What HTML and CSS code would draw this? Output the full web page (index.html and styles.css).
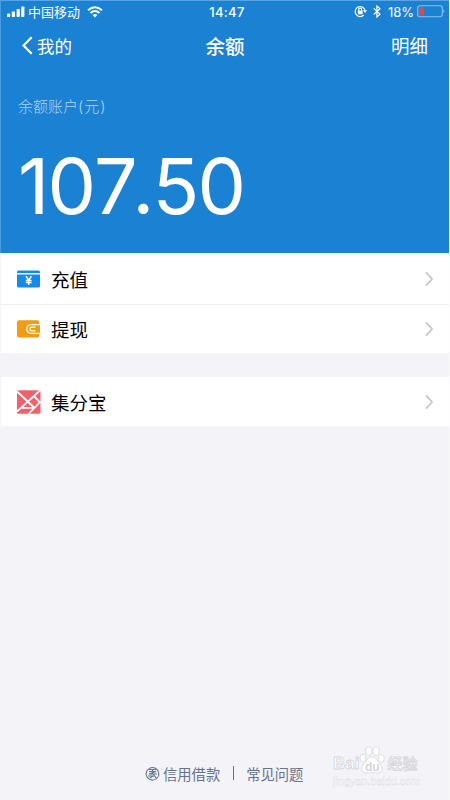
FILE: index.html
```html
<!DOCTYPE html>
<html lang="zh-CN">
<head>
<meta charset="utf-8">
<title>余额</title>
<link rel="stylesheet" href="styles.css">
</head>
<body>
<main class="screen">
  <header class="hero">
    <div class="status">
      <div class="carrier">
        <svg class="signal" width="18" height="12" viewBox="0 0 18 12"><rect x="0" y="7.5" width="3.2" height="3.5" rx=".8"/><rect x="4.8" y="5.5" width="3.2" height="5.5" rx=".8"/><rect x="9.6" y="3" width="3.2" height="8" rx=".8"/><rect x="14.2" y="0.5" width="3.2" height="10.5" rx=".8"/></svg>
        <span>中国移动</span>
        <svg class="wifi" width="16" height="12" viewBox="0 0 16 12"><path d="M1 4.2Q8-1.6 15 4.2M3.5 6.9Q8 3.2 12.5 6.9"/><path class="dot" d="M5.6 8.9Q8 7.1 10.4 8.9L8 11.5Z"/></svg>
      </div>
      <span class="time">14:47</span>
      <div class="power">
        <svg width="13" height="13" viewBox="0 0 13 13"><path class="line" d="M9.8 10A5 5 0 1 1 11 5.2M4.7 6V4.6a1.5 1.5 0 0 1 3 0V6"/><path class="solid" d="M3.8 5.5h4.8v3.7H3.8zM9 5.3h4L11 8z"/></svg>
        <svg class="bt" width="8" height="13" viewBox="0 0 8 13"><path class="line" d="M.7 3.4 7 9.2 3.9 12V1L7 3.7.7 9.5"/></svg>
        <span>18%</span>
        <svg class="battery" width="28" height="13" viewBox="0 0 28 13"><rect class="case" x=".7" y=".7" width="24.6" height="11" rx="2.2"/><rect class="charge" x="2" y="2" width="5" height="8.5" rx="1"/><path class="tip" d="M26.3 4.2q2.2 2 0 4z"/></svg>
      </div>
    </div>
    <nav class="nav">
      <a class="back"><svg width="11" height="19" viewBox="0 0 11 19"><path d="M9.7 1.2 1.5 9.5l8.2 8.3"/></svg>我的</a>
      <h1>余额</h1>
      <a class="detail">明细</a>
    </nav>
    <p class="label">余额账户<span>(元)</span></p>
    <p class="amount">10<span>7</span>.50</p>
  </header>
  <ul class="list">
    <li class="row">
      <svg class="icon" width="24" height="24" viewBox="0 0 24 24"><path fill="#168ae9" d="M1.5 3.5h20q1.5 0 1.5 1.5v1H0V5q0-1.5 1.5-1.5zM0 7.5h23V19q0 1.6-1.6 1.6H1.6Q0 20.6 0 19z"/><path class="yen" d="m9 9.3 2.7 3.6 2.7-3.6M11.7 13v5M8.8 13.4h5.8M8.8 15.6h5.8"/></svg>
      <span>充值</span>
      <svg class="arrow" width="8" height="16" viewBox="0 0 8 16"><path d="m1 1.3 6 6.7-6 6.7"/></svg>
    </li>
    <li class="row second">
      <svg class="icon" width="24" height="24" viewBox="0 0 24 24"><path fill="#f29b13" d="M2 3.2h18.5q1.7 0 1.7 1.8v2H14a5 5 0 0 0 0 10h8.2v1.8q0 1.8-1.7 1.8H2q-2 0-2-2V5.2q0-2 2-2z"/><path fill="#f29b13" d="M14.2 8.3H23v7.4h-8.8a3.7 3.7 0 0 1 0-7.4z"/><path class="clasp" d="M18.5 10.1h-3.7a1.9 1.9 0 0 0 0 3.8h3.7"/></svg>
      <span>提现</span>
      <svg class="arrow" width="8" height="16" viewBox="0 0 8 16"><path d="m1 1.3 6 6.7-6 6.7"/></svg>
    </li>
  </ul>
  <ul class="list bonus">
    <li class="row">
      <svg class="icon" width="24" height="24" viewBox="0 0 24 24"><rect width="23.5" height="23.5" y=".2" rx="1.5" fill="#f0616b"/><path class="weave" d="M0 1.5 17 17.5M23.5 0 0 21.5M5 17.8h12M23.5 11.5 11.5 24M17.3 6.5l6.5 6.5"/></svg>
      <span>集分宝</span>
      <svg class="arrow" width="8" height="16" viewBox="0 0 8 16"><path d="m1 1.3 6 6.7-6 6.7"/></svg>
    </li>
  </ul>
  <footer class="footer">
    <svg class="seal" width="15" height="15" viewBox="0 0 15 15"><path d="M13 10.8A6.3 6.3 0 1 1 13.7 7v3.5M4 3.5h7M4 5.5h7L4 8h8M3 10h5l-3 2M8.5 8.5l3 4M7.5 3v5"/></svg>
    <a>信用借款</a><i class="divider"></i><a>常见问题</a>
  </footer>
  <div class="watermark">
    <div class="brand"><span>Bai</span><svg width="26" height="29" viewBox="0 0 26 29"><g class="paw"><ellipse cx="4" cy="12" rx="3" ry="4"/><ellipse cx="9.7" cy="5" rx="3.2" ry="4.2"/><ellipse cx="17" cy="5" rx="3.2" ry="4.2"/><ellipse cx="22.3" cy="12.5" rx="3" ry="4"/><path d="M13 11c4 0 5 4 9 8 3 4 1 8.5-4 8-3-.5-6-.5-9 0-6 .5-8-4-5-8 4-4 5-8 9-8z"/></g><text x="6" y="25">du</text></svg><span class="cn">经验</span></div>
    <div class="site">jingyan.baidu.com</div>
  </div>
</main>
</body>
</html>
```
FILE: styles.css
```css
* { box-sizing: border-box; }
body { margin: 0; font-family: Inter, "Noto Sans CJK SC", sans-serif; }
p, h1, ul { margin: 0; padding: 0; }
svg { display: block; fill: none; flex: none; }
.screen { position: relative; width: 450px; height: 800px; background: #f4f3f8; border-right: 1px solid #fbfbfd; overflow: hidden; }
.hero { width: 450px; height: 253px; background: #1b81d3; color: #fff; border-top: 1px solid #57a5e4; border-left: 1px solid #4a9ce0; display: flex; flex-direction: column; }
.status { height: 21px; display: grid; grid-template-columns: 1fr auto 1fr; align-items: center; font-size: 13px; line-height: 20px; padding: 0 5px 0 6px; }
.carrier { display: flex; align-items: center; }
.carrier span { margin: 0 7px 0 3px; }
.signal { fill: #fff; }
.wifi { stroke: #fff; stroke-width: 2; }
.wifi .dot { fill: #fff; stroke: none; }
.time { font-weight: 500; letter-spacing: .35px; padding-left: 2px; }
.power { display: flex; align-items: center; justify-content: flex-end; }
.line { stroke: #fff; stroke-width: 1.2; }
.solid { fill: #fff; }
.bt { margin: 0 7px 0 6px; }
.battery { margin-left: 3px; }
.case { stroke: #8fc0eb; stroke-width: 1.1; }
.charge { fill: #e74448; }
.tip { fill: #8fc0eb; }
.nav { height: 46px; padding: 0 22px 0 21px; display: grid; grid-template-columns: 1fr auto 1fr; align-items: center; font-size: 17.5px; }
.back { display: flex; align-items: center; gap: 4px; }
.back svg { stroke: #fff; stroke-width: 2.2; }
h1 { font-size: 19.5px; font-weight: 500; }
.detail { text-align: right; font-size: 18.5px; }
.label { margin: 28px 0 0 17px; font-size: 15px; line-height: 22px; font-weight: 300; color: #b1d5f3; }
.label span { letter-spacing: 1px; }
.amount { margin: 22px 0 0 17px; font-size: 77px; line-height: 92px; font-weight: 400; letter-spacing: -1.9px; font-kerning: none; }
.amount span { letter-spacing: -5.5px; }
.list { list-style: none; background: #fff; margin-left: 1px; }
.row { height: 51px; padding: 0 16px; display: flex; align-items: center; font-size: 18.5px; color: #000; }
.row span { flex: 1; margin-left: 10px; }
.second { height: 49px; border-top: 1px solid #eeeef1; }
.arrow { stroke: #c7c7cc; stroke-width: 1.8; }
.bonus { margin-top: 24px; }
.bonus .row { height: 49px; }
.yen { stroke: #fff; stroke-width: 1.5; }
.clasp { stroke: #fff; stroke-width: 1.2; }
.weave { stroke: #fff; stroke-width: 1.8; }
.footer { display: flex; align-items: center; height: 22px; margin: 336px 0 0 145px; color: #64738f; font-size: 14.3px; }
.seal { stroke: #64738f; stroke-width: 1.1; margin-right: 3px; }
.divider { width: 1px; height: 14px; margin: 0 12px 0 13px; background: #64738f; }
.watermark { position: absolute; left: 333px; top: 745px; width: 92px; }
.brand { display: flex; align-items: flex-end; height: 30px; font: bold 17px/22px "Liberation Sans", "Noto Sans CJK SC", sans-serif; color: #fff; -webkit-text-stroke: .8px #d5d4da; }
.brand .cn { font-size: 15px; margin-left: 2px; font-weight: 500; }
.paw { fill: #fff; stroke: #d5d4da; stroke-width: .8; }
.brand text { fill: #d5d4da; stroke: none; font-size: 12px; }
.site { font: 10.5px/12px "Liberation Sans", sans-serif; color: #fff; -webkit-text-stroke: .4px #dddce2; letter-spacing: .15px; }
```
